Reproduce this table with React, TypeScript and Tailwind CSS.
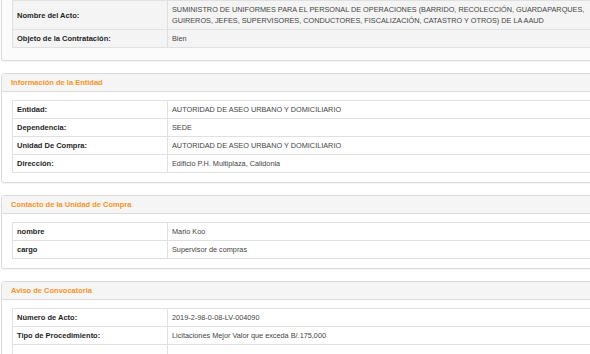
import type { ReactNode } from 'react';

type Row = { label: string; value: ReactNode };

const ACTO: Row[] = [
  {
    label: 'Nombre del Acto:',
    value: (
      <>
        SUMINISTRO DE UNIFORMES PARA EL PERSONAL DE OPERACIONES (BARRIDO, RECOLECCIÓN, GUARDAPARQUES,
        <br />
        GUIREROS, JEFES, SUPERVISORES, CONDUCTORES, FISCALIZACIÓN, CATASTRO Y OTROS) DE LA AAUD
      </>
    ),
  },
  { label: 'Objeto de la Contratación:', value: 'Bien' },
];

const ENTIDAD: Row[] = [
  { label: 'Entidad:', value: 'AUTORIDAD DE ASEO URBANO Y DOMICILIARIO' },
  { label: 'Dependencia:', value: 'SEDE' },
  { label: 'Unidad De Compra:', value: 'AUTORIDAD DE ASEO URBANO Y DOMICILIARIO' },
  { label: 'Dirección:', value: 'Edificio P.H. Multiplaza, Calidonia' },
];

const CONTACTO: Row[] = [
  { label: 'nombre', value: 'Mario Koo' },
  { label: 'cargo', value: 'Supervisor de compras' },
];

const AVISO: Row[] = [
  { label: 'Número de Acto:', value: '2019-2-98-0-08-LV-004090' },
  { label: 'Tipo de Procedimiento:', value: 'Licitaciones Mejor Valor que exceda B/.175,000' },
  { label: '', value: '' },
];

function DataTable({ rows, shaded }: { rows: Row[]; shaded?: boolean }) {
  return (
    <table className="w-full table-fixed border-collapse">
      <colgroup>
        <col className="w-[155px]" />
        <col />
      </colgroup>
      <tbody>
        {rows.map((r, i) => (
          <tr key={i} className={shaded ? 'bg-[#f4f4f4]' : 'bg-white'}>
            <td className="border border-[#e0e0e0] px-[4px] py-[3px] align-middle font-bold text-[#1e1e1e]">
              {r.label}
            </td>
            <td className="border border-[#e0e0e0] px-[4px] py-[3px] align-middle text-[7.3px] text-[#444]">
              {r.value || '\u00a0'}
            </td>
          </tr>
        ))}
      </tbody>
    </table>
  );
}

function Panel({ title, rows }: { title: string; rows: Row[] }) {
  return (
    <div className="mb-[12px] rounded-[3px] border border-[#dcdcdc] bg-white shadow-[0_1px_1px_rgba(0,0,0,0.05)]">
      <div className="flex h-[18px] items-center border-b border-[#dcdcdc] bg-[#f5f5f5] pl-[9px] font-bold text-[#f7941d]">
        {title}
      </div>
      <div className="px-[10px] pt-[8px] pb-[9px]">
        <DataTable rows={rows} />
      </div>
    </div>
  );
}

export default function App() {
  return (
    <div
      className="h-[354px] w-[590px] overflow-hidden bg-white text-[7.5px] leading-[11px]"
      style={{ fontFamily: '"Liberation Sans", Arial, Helvetica, sans-serif' }}
    >
      <div className="w-[900px] pl-[1px]">
        <div className="mb-[12px] rounded-b-[3px] border border-t-0 border-[#dcdcdc] bg-[#fbfbfb] shadow-[0_1px_1px_rgba(0,0,0,0.05)]">
          <div className="px-[10px] pb-[12px]">
            <DataTable rows={ACTO} shaded />
          </div>
        </div>
        <Panel title="Información de la Entidad" rows={ENTIDAD} />
        <Panel title="Contacto de la Unidad de Compra" rows={CONTACTO} />
        <Panel title="Aviso de Convocatoria" rows={AVISO} />
      </div>
    </div>
  );
}
